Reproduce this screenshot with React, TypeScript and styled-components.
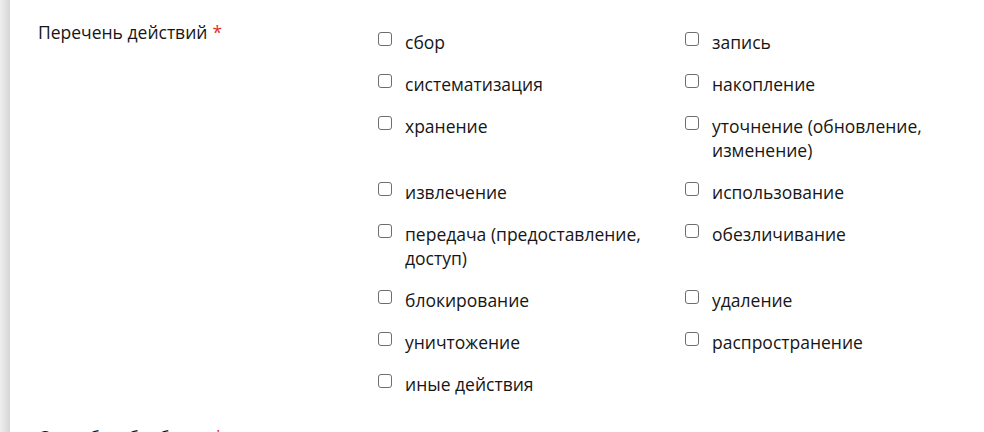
import React from 'react';
import styled, { createGlobalStyle } from 'styled-components';

const GlobalStyle = createGlobalStyle`
  html, body {
    margin: 0;
    padding: 0;
    background: #ffffff;
  }
  body {
    font-family: "Open Sans", "Noto Sans", sans-serif;
    color: #161616;
  }
`;

const Page = styled.div`
  display: flex;
  height: 432px;
  overflow: hidden;
`;

const SideEdge = styled.div`
  width: 10px;
  flex-shrink: 0;
  background: linear-gradient(to right, #eeeeee, #d6d6d6);
`;

const Content = styled.div`
  flex: 1;
  padding: 20px 0 0 28px;
`;

const FieldRow = styled.div`
  display: grid;
  grid-template-columns: 340px 1fr;
  margin-bottom: 29px;
`;

const Label = styled.div`
  font-size: 17.5px;
  line-height: 24px;
`;

const Required = styled.span`
  color: #e0302a;
  margin-left: 5px;
`;

const Options = styled.div`
  display: grid;
  grid-template-columns: 307px 276px;
  row-gap: 18px;
  padding-top: 10px;
`;

const Option = styled.label`
  display: flex;
  align-items: flex-start;
  gap: 13px;
  font-size: 17.5px;
  line-height: 24px;
  padding-right: 20px;
`;

const Box = styled.span`
  flex-shrink: 0;
  width: 14px;
  height: 14px;
  margin-top: 2px;
  box-sizing: border-box;
  border: 1.5px solid #6e6e6e;
  border-radius: 3px;
  background: #fff;
`;

const actions = [
  ['сбор', 'запись'],
  ['систематизация', 'накопление'],
  ['хранение', 'уточнение (обновление, изменение)'],
  ['извлечение', 'использование'],
  ['передача (предоставление, доступ)', 'обезличивание'],
  ['блокирование', 'удаление'],
  ['уничтожение', 'распространение'],
  ['иные действия'],
];

const App: React.FC = () => {
  return (
    <>
      <GlobalStyle />
      <Page>
        <SideEdge />
        <Content>
          <FieldRow>
            <Label>
              Перечень действий<Required>*</Required>
            </Label>
            <Options>
              {actions.flat().map((text) => (
                <Option key={text}>
                  <Box />
                  <span>{text}</span>
                </Option>
              ))}
            </Options>
          </FieldRow>
          <FieldRow>
            <Label>
              Способы обработки<Required>*</Required>
            </Label>
          </FieldRow>
        </Content>
      </Page>
    </>
  );
};

export default App;
